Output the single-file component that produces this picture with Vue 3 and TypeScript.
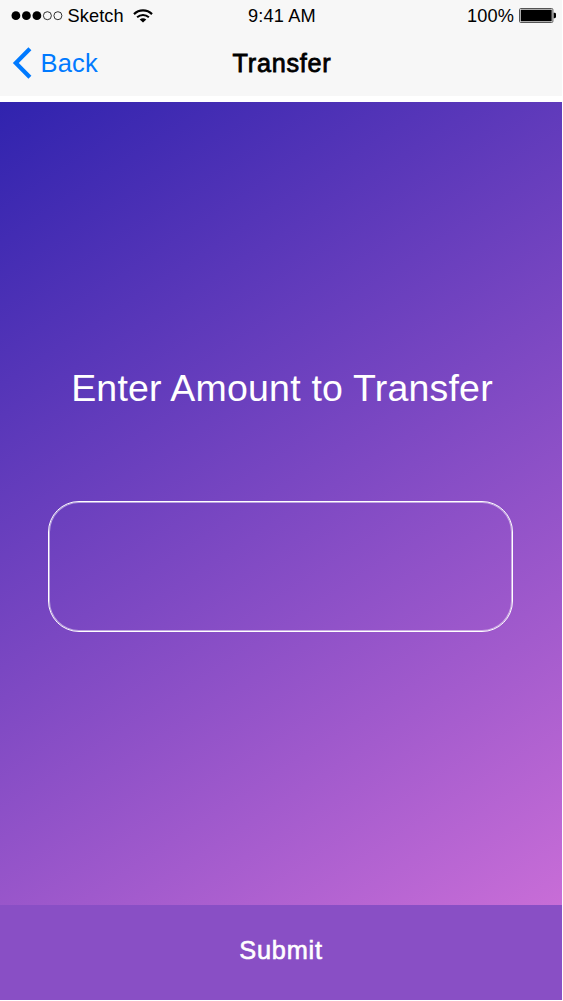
<script setup lang="ts">
import { ref } from 'vue'

const amount = ref('')
const signal: boolean[] = [true, true, true, false, false]
</script>

<template>
  <main class="screen">
    <header class="top">
      <div class="status">
        <div class="carrier">
          <svg class="dots" width="54" height="12" viewBox="0 0 54 12">
            <circle
              v-for="(on, i) in signal"
              :key="i"
              :cx="4.9 + i * 10.5"
              cy="5.7"
              :r="on ? 4.4 : 4"
              :fill="on ? '#000' : 'none'"
              stroke="#000"
              :stroke-width="on ? 0 : 0.8"
            />
          </svg>
          <span class="network">Sketch</span>
          <svg class="wifi" width="20" height="14" viewBox="0 0 20 14">
            <path d="M1 5.1C6 .2 14 .2 19 5.1" fill="none" stroke="#000" stroke-width="2.2" />
            <path d="M4.1 8.2C7.5 5.1 12.5 5.1 15.9 8.2" fill="none" stroke="#000" stroke-width="2" />
            <path d="M6.7 10.6Q10 8 13.3 10.6L10 13.6Z" fill="#000" />
          </svg>
        </div>
        <span class="time">9:41 AM</span>
        <div class="power">
          <span class="percent">100%</span>
          <svg class="battery" width="38" height="15" viewBox="0 0 38 15">
            <rect x=".5" y=".5" width="33.4" height="14" rx="1.2" fill="#f7f7f7" stroke="#555" />
            <rect x="1.7" y="1.7" width="31" height="11.6" fill="#000" />
            <path d="M34.7 4.8H35.6Q37 4.8 37 6.2V8.8Q37 10.2 35.6 10.2H34.7Z" fill="#000" />
          </svg>
        </div>
      </div>
      <nav class="nav">
        <a class="back">
          <svg class="chevron" width="21" height="32" viewBox="0 0 21 32">
            <path d="M18.9 1.8L4.8 16L18.9 30.2" fill="none" stroke="#007aff" stroke-width="4.2" />
          </svg>
          <span class="back-label">Back</span>
        </a>
        <h1 class="title">Transfer</h1>
        <span></span>
      </nav>
    </header>
    <section class="body">
      <div class="form">
        <h2 class="prompt">Enter Amount to Transfer</h2>
        <input v-model="amount" class="amount" type="text" inputmode="decimal" aria-label="Amount" />
      </div>
      <button class="submit" type="button">Submit</button>
    </section>
  </main>
</template>

<style>
body {
  margin: 0;
  background: #fff;
}
</style>

<style scoped>
.screen {
  width: 563px;
  height: 1001px;
  overflow: hidden;
  background: #fff;
  font-family: "Liberation Sans", Arial, sans-serif;
}
.top {
  width: 562px;
  height: 96px;
  margin-bottom: 6px;
  background: #f7f7f7;
}
.status {
  display: grid;
  grid-template-columns: 1fr auto 1fr;
  align-items: center;
  height: 31px;
  box-sizing: border-box;
  padding: 0 5px 0 7px;
  font-size: 18.2px;
  line-height: 31px;
}
.time,
.network,
.percent {
  padding-top: 1px;
}
.time {
  letter-spacing: 0.15px;
}
.network {
  margin: 0 9px 0 3px;
  letter-spacing: 0.1px;
}
.percent {
  letter-spacing: 0.15px;
}
.carrier,
.power {
  display: flex;
  align-items: center;
}
.carrier {
  padding-left: 3.5px;
}
.power {
  justify-content: flex-end;
  gap: 5px;
}
.wifi,
.battery {
  margin-top: -1px;
}
.nav {
  display: grid;
  grid-template-columns: 1fr auto 1fr;
  align-items: center;
  height: 65px;
  padding: 0 9px 0 11px;
}
.back {
  display: flex;
  align-items: center;
  gap: 8.5px;
  color: #007aff;
  font-size: 25.5px;
  letter-spacing: 0.2px;
}
.chevron {
  margin-bottom: 1px;
}
.title {
  margin: 0;
  font-size: 25.2px;
  font-weight: 400;
  letter-spacing: 0.75px;
  -webkit-text-stroke: 0.8px #000;
}
.body {
  display: flex;
  flex-direction: column;
  width: 562px;
  height: 898px;
}
.form {
  flex: 1;
  display: flex;
  flex-direction: column;
  align-items: center;
  background: linear-gradient(147deg, #3023ae, #c86dd7);
}
.prompt {
  margin: 264px 0 0 2px;
  color: #fff;
  font-size: 37.5px;
  font-weight: 400;
  line-height: 44px;
  letter-spacing: 0.2px;
  white-space: nowrap;
}
.amount {
  box-sizing: border-box;
  width: 465px;
  height: 131px;
  margin: 91px 1px 0 0;
  padding: 0 30px;
  border: 1px solid #fff;
  border-radius: 31px;
  outline: none;
  background: transparent;
  box-shadow: inset 0 0 0 1px rgba(255, 255, 255, 0.5);
  color: #fff;
  font: 36px "Liberation Sans", Arial, sans-serif;
}
.submit {
  height: 95px;
  padding: 0 0 5px;
  border: 0;
  background: #894fc5;
  color: #fff;
  font: 25.3px "Liberation Sans", Arial, sans-serif;
  letter-spacing: 0.8px;
  -webkit-text-stroke: 0.6px #fff;
}
</style>
